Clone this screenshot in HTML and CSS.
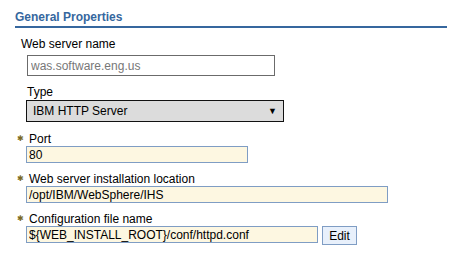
FILE: index.html
```html
<!DOCTYPE html>
<html lang="en">
<head>
    <meta charset="UTF-8">
    <title>General Properties</title>
    <link rel="stylesheet" href="styles.css">
</head>
<body>
    <div class="section">
        <h2 class="section-title">General Properties</h2>

        <div class="field field-name">
            <label class="label">Web server name</label>
            <input class="text readonly" type="text" value="was.software.eng.us" readonly>
        </div>

        <div class="field field-type">
            <label class="label">Type</label>
            <div class="select">
                <span>IBM HTTP Server</span>
                <span class="arrow">&#9660;</span>
            </div>
        </div>

        <div class="field req">
            <label class="label"><span class="star">&#10033;</span>Port</label>
            <input class="text port" type="text" value="80">
        </div>

        <div class="field req">
            <label class="label"><span class="star">&#10033;</span>Web server installation location</label>
            <input class="text install" type="text" value="/opt/IBM/WebSphere/IHS">
        </div>

        <div class="field req">
            <label class="label"><span class="star">&#10033;</span>Configuration file name</label>
            <div class="row">
                <input class="text conf" type="text" value="${WEB_INSTALL_ROOT}/conf/httpd.conf">
                <button class="edit-btn">Edit</button>
            </div>
        </div>
    </div>
</body>
</html>
```

FILE: styles.css
```css
* {
    margin: 0;
    padding: 0;
    box-sizing: border-box;
}

body {
    font-family: "Liberation Sans", Arial, sans-serif;
    font-size: 12px;
    color: #000;
    background: #fff;
}

.section {
    width: 432px;
    margin: 10px 0 0 15px;
}

.section-title {
    font-size: 12px;
    font-weight: bold;
    line-height: 14px;
    color: #36679e;
    border-bottom: 2px solid #36679e;
    padding-bottom: 2px;
}

.field {
    display: flex;
    flex-direction: column;
    align-items: flex-start;
}

.label {
    line-height: 14px;
    display: flex;
    align-items: center;
}

.field-name {
    margin-top: 9px;
    padding-left: 6px;
}

.field-name .label {
    margin-bottom: 4px;
}

.text {
    font-family: "Liberation Sans", Arial, sans-serif;
    font-size: 12px;
    border: 1px solid #7f9dc4;
    background: #fdf7e1;
    color: #000;
    padding: 0 2px;
    outline: none;
}

.readonly {
    width: 248px;
    height: 21px;
    margin-left: 6px;
    border-color: #6b6b6b;
    background: #fff;
    color: #777;
    padding: 0 3px;
}

.field-type {
    margin-top: 9px;
    padding-left: 12px;
}

.field-type .label {
    margin-bottom: 1px;
}

.select {
    width: 258px;
    height: 22px;
    margin-left: -1px;
    border: 1px solid #111;
    background: #dcdcdc;
    display: flex;
    align-items: center;
    justify-content: space-between;
    padding: 0 6px 0 6px;
}

.arrow {
    font-size: 9px;
}

.req {
    padding-left: 2px;
    margin-top: 10px;
}

.req + .req {
    margin-top: 9px;
}

.star {
    color: #7a6a24;
    font-size: 8px;
    width: 12px;
}

.req .text {
    margin-left: 9px;
    height: 17px;
}

.port {
    width: 222px;
}

.install {
    width: 362px;
}

.row {
    display: flex;
    gap: 4px;
}

.conf {
    width: 292px;
}

.edit-btn {
    font-family: "Liberation Sans", Arial, sans-serif;
    font-size: 12px;
    width: 35px;
    height: 19px;
    border: 1px solid #7f9dc4;
    background: #e8f0fb;
    color: #000;
}
```
